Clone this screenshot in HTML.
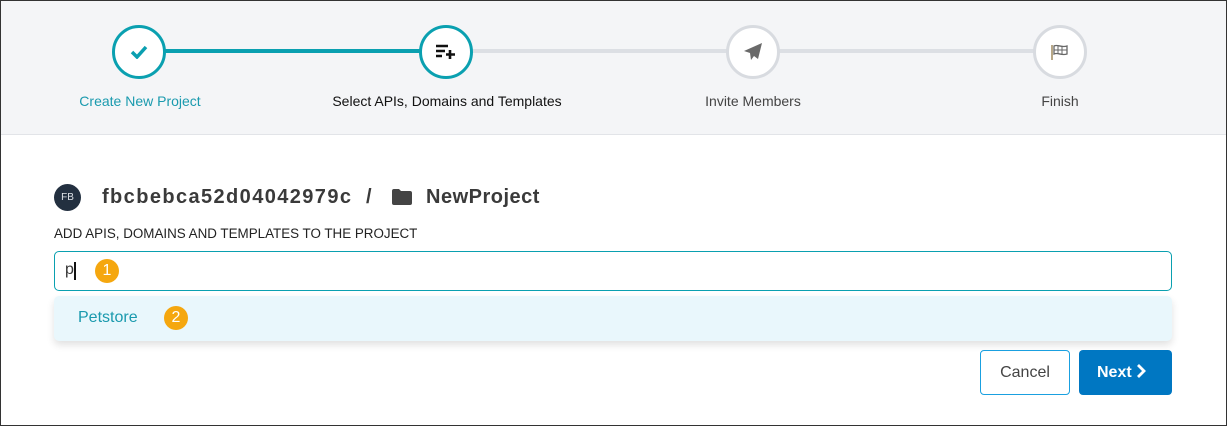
<!DOCTYPE html><html><head><style>
*{box-sizing:border-box;margin:0;padding:0}
body{width:1227px;height:426px;position:relative;font-family:"Liberation Sans",sans-serif;background:#fff;overflow:hidden}
.frame{position:absolute;left:0;top:0;width:1227px;height:426px;border:1px solid #333;}
.hdr{position:absolute;left:1px;top:1px;width:1225px;height:134px;background:#f4f5f7;border-bottom:1px solid #e2e4e8}
.line{position:absolute;top:48px;height:4px}
.c{position:absolute;top:24px;width:54px;height:54px;border-radius:50%;background:#fff;display:flex;align-items:center;justify-content:center}
.lbl{position:absolute;top:92px;font-size:14px;transform:translateX(-50%);white-space:nowrap}
.abs{position:absolute}
.badge{position:absolute;width:24px;height:24px;border-radius:50%;background:#f5a70f;color:#fff;font-size:16px;text-align:center;line-height:23px}
</style></head><body>
<div class="hdr">
<div class="line" style="left:139px;width:307px;background:#0aa0b0"></div>
<div class="line" style="left:446px;width:613px;background:#dcdfe4"></div>
<div class="c" style="left:111px;border:3px solid #0aa0b0"><svg width="18" height="14" viewBox="0 0 18 14"><path d="M2 7l5 5 9-10" fill="none" stroke="#0a9fb0" stroke-width="3.5"/></svg></div>
<div class="c" style="left:418px;border:3px solid #0aa0b0"><svg width="20" height="16" viewBox="0 0 20 16"><path d="M0 2h12M0 7h9M0 12h6M14 6v9M10 10.5h9" stroke="#111" stroke-width="2.6"/></svg></div>
<div class="c" style="left:725px;border:3px solid #d8dbe0"><svg width="20" height="20" viewBox="0 0 20 20"><path d="M19 1L1 9l6 2 1 7 3-4 4 3z" fill="#6a6a6a"/></svg></div>
<div class="c" style="left:1032px;border:3px solid #d8dbe0"><svg width="20" height="16" viewBox="0 0 20 16"><path d="M2 1v15" stroke="#a08a60" stroke-width="1.5"/><path d="M4 2c4-2 7 2 13 0v8c-6 2-9-2-13 0z" fill="#fff" stroke="#666" stroke-width="1.3"/><path d="M8 2v8M12 3v8M4 6h13" stroke="#666" stroke-width="1"/></svg></div>
<div class="lbl" style="left:139px;color:#1a9aae">Create New Project</div>
<div class="lbl" style="left:446px;color:#111">Select APIs, Domains and Templates</div>
<div class="lbl" style="left:752px;color:#444">Invite Members</div>
<div class="lbl" style="left:1059px;color:#444">Finish</div>
</div>
<div class="abs" style="left:54px;top:184px;width:27px;height:27px;border-radius:50%;background:#233040;color:#dfe3e8;font-size:10px;line-height:27px;text-align:center">FB</div>
<div class="abs" style="left:102px;top:186px;font-size:20px;font-weight:bold;color:#3a3a3a;letter-spacing:1.4px">fbcbebca52d04042979c</div>
<div class="abs" style="left:366px;top:186px;font-size:20px;font-weight:bold;color:#3a3a3a">/</div>
<svg class="abs" style="left:392px;top:189px" width="20" height="16" viewBox="0 0 20 16"><path d="M0 2q0-2 2-2h5l2 2h9q2 0 2 2v10q0 2-2 2H2q-2 0-2-2z" fill="#444"/></svg>
<div class="abs" style="left:426px;top:186px;font-size:20px;font-weight:bold;color:#3a3a3a;letter-spacing:0.5px">NewProject</div>
<div class="abs" style="left:54px;top:226px;font-size:13.4px;color:#222">ADD APIS, DOMAINS AND TEMPLATES TO THE PROJECT</div>
<div class="abs" style="left:54px;top:251px;width:1118px;height:40px;border:1px solid #0aa0b0;border-radius:5px"></div>
<div class="abs" style="left:65px;top:261px;font-size:16px;color:#333">p</div>
<div class="abs" style="left:74px;top:262px;width:2px;height:18px;background:#111"></div>
<div class="badge" style="left:95px;top:259px">1</div>
<div class="abs" style="left:54px;top:296px;width:1118px;height:45px;background:#e9f7fc;border-radius:5px;box-shadow:0 4px 8px rgba(0,0,0,.12)"></div>
<div class="abs" style="left:78px;top:309px;font-size:16px;color:#1a9aae">Petstore</div>
<div class="badge" style="left:164px;top:306px">2</div>
<div class="abs" style="left:980px;top:350px;width:90px;height:45px;border:1px solid #1aa0e0;border-radius:4px;font-size:16px;color:#444;text-align:center;line-height:43px">Cancel</div>
<div class="abs" style="left:1079px;top:350px;width:93px;height:45px;background:#0077c2;border-radius:4px;font-size:16px;font-weight:bold;color:#fff;line-height:45px;padding-left:18px">Next <svg width="10" height="14" viewBox="0 0 10 14" style="vertical-align:-1px"><path d="M2 1l6 6-6 6" fill="none" stroke="#fff" stroke-width="2.8"/></svg></div>
<div class="frame"></div>
</body></html>
